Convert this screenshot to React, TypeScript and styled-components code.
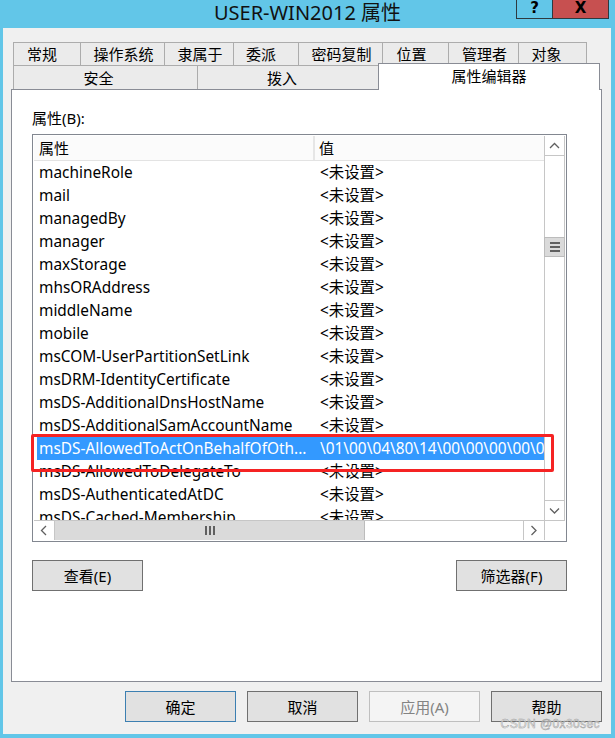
import React from "react";
import styled, { createGlobalStyle } from "styled-components";

const GlobalStyle = createGlobalStyle`
  html, body { margin: 0; padding: 0; background: #62c6e8; }
  body { font-family: "Noto Sans", "Noto Sans CJK SC", sans-serif; color: #000; }
  * { box-sizing: border-box; }
`;

const FONT = `"Noto Sans", "Noto Sans CJK SC", sans-serif`;

const Window = styled.div`
  position: relative;
  width: 615px;
  height: 738px;
  background: #62c6e8;
  display: flex;
  flex-direction: column;
  padding-bottom: 4px;
  overflow: hidden;
`;

const TitleBar = styled.div`
  height: 28px;
  flex: none;
  display: grid;
  grid-template-columns: 1fr auto 1fr;
  align-items: start;
`;

const Title = styled.div`
  grid-column: 2;
  font-family: ${FONT};
  font-size: 20px;
  line-height: 23px;
  padding-top: 1px;
  color: #111;
  white-space: nowrap;
`;

const CaptionGroup = styled.div`
  grid-column: 3;
  justify-self: end;
  display: flex;
  margin-right: 6px;
`;

const CaptionButton = styled.div<{ $w: number; $bg: string }>`
  width: ${(p) => p.$w}px;
  height: 19px;
  background: ${(p) => p.$bg};
  border: 1px solid #2e3a40;
  border-top: none;
  display: flex;
  justify-content: center;
  align-items: flex-start;
  & + & { margin-left: -1px; }
`;

const CaptionGlyph = styled.span`
  font-family: "DejaVu Sans", sans-serif;
  font-weight: bold;
  font-size: 15px;
  line-height: 16px;
  color: #000;
`;

const Body = styled.div`
  flex: 1;
  margin: 0 4px 0 3px;
  background: #f0f0f0;
  display: flex;
  flex-direction: column;
  padding: 14px 9px 12px 8px;
`;

const TabStrip = styled.div`
  display: flex;
  flex-direction: column;
  margin: 0 1px 0 2px;
  flex: none;
`;

const TabRow = styled.div<{ $h: number }>`
  display: flex;
  align-items: flex-start;
  height: ${(p) => p.$h}px;
`;

const Tab = styled.div<{ $w: number; $active?: boolean; $h: number; $shift?: number }>`
  width: ${(p) => p.$w}px;
  height: ${(p) => (p.$active ? p.$h + 3 : p.$h)}px;
  flex: none;
  border: 1px solid ${(p) => (p.$active ? "#898c95" : "#acacac")};
  border-bottom: none;
  background: ${(p) => (p.$active ? "#ffffff" : "#ebebeb")};
  font-family: ${FONT};
  font-size: 15px;
  line-height: 20px;
  display: flex;
  justify-content: center;
  align-items: ${(p) => (p.$active ? "flex-start" : "center")};
  padding-top: ${(p) => (p.$active ? 2 : 0)}px;
  padding-right: ${(p) => (p.$shift || 0) * 2}px;
  white-space: nowrap;
  position: relative;
  z-index: ${(p) => (p.$active ? 2 : 0)};
  margin-top: ${(p) => (p.$active ? -2 : 0)}px;
  & + & { margin-left: ${(p) => (p.$active ? -3 : -1)}px; }
`;

const Panel = styled.div`
  flex: 1;
  background: #ffffff;
  border: 1px solid #898c95;
  padding: 18px 0 0 20px;
  display: flex;
  flex-direction: column;
`;

const FieldLabel = styled.div`
  font-family: ${FONT};
  font-size: 15px;
  line-height: 20px;
  height: 20px;
  margin-bottom: 6px;
`;

const ListBox = styled.div`
  position: relative;
  width: 535px;
  height: 408px;
  border: 1px solid #828790;
  padding: 1px;
  background: #fff;
  display: grid;
  grid-template-columns: 1fr 21px;
  grid-template-rows: 1fr 20px;
`;

const ListArea = styled.div`
  display: flex;
  flex-direction: column;
  overflow: hidden;
  min-width: 0;
`;

const Header = styled.div`
  height: 25px;
  flex: none;
  display: grid;
  grid-template-columns: 279px 1fr;
  background: #fbfbfb;
  border-bottom: 1px solid #e3e3e3;
  font-family: ${FONT};
  font-size: 15px;
  line-height: 24px;
`;

const HeaderCell = styled.div<{ $divider?: boolean }>`
  padding-left: ${(p) => (p.$divider ? 4 : 5)}px;
  border-left: ${(p) => (p.$divider ? "2px solid #e6e6e6" : "none")};
  white-space: nowrap;
`;

const Rows = styled.div`
  flex: 1;
  overflow: hidden;
  padding-left: 3px;
`;

const Row = styled.div<{ $selected?: boolean }>`
  height: 23px;
  display: grid;
  grid-template-columns: 276px 1fr;
  font-family: ${FONT};
  font-size: 15.4px;
  line-height: 23px;
  background: ${(p) => (p.$selected ? "#3399ff" : "transparent")};
  color: ${(p) => (p.$selected ? "#fff" : "#000")};
`;

const Cell = styled.div<{ $value?: boolean }>`
  padding-left: ${(p) => (p.$value ? 7 : 2)}px;
  white-space: nowrap;
  overflow: hidden;
`;

const VScroll = styled.div`
  display: flex;
  flex-direction: column;
  border-left: 1px solid #c6c6c6;
  border-right: 1px solid #c6c6c6;
  background: #fff;
`;

const ArrowButton = styled.div<{ $edge: "top" | "bottom" | "left" | "right" }>`
  flex: none;
  width: ${(p) => (p.$edge === "left" || p.$edge === "right" ? "21px" : "auto")};
  height: ${(p) => (p.$edge === "top" || p.$edge === "bottom" ? "20px" : "auto")};
  display: flex;
  align-items: center;
  justify-content: center;
  background: #fff;
  ${(p) =>
    p.$edge === "top"
      ? "border-bottom: 1px solid #c6c6c6;"
      : p.$edge === "bottom"
      ? "border-top: 1px solid #c6c6c6;"
      : p.$edge === "left"
      ? "border-right: 1px solid #c6c6c6;"
      : "border-left: 1px solid #c6c6c6;"}
`;

const VTrack = styled.div`
  flex: 1;
  padding-top: 81px;
`;

const VThumb = styled.div`
  height: 20px;
  margin: 0 -1px;
  background: #dadada;
  border: 1px solid #bcbcbc;
  display: flex;
  align-items: center;
  justify-content: center;
`;

const HScroll = styled.div`
  display: flex;
  border-top: 1px solid #c6c6c6;
  background: #fff;
`;

const HTrack = styled.div`
  flex: 1;
  display: flex;
`;

const HThumb = styled.div`
  width: 310px;
  background: #dadada;
  border-right: 1px solid #bcbcbc;
  display: flex;
  align-items: center;
  justify-content: center;
`;

const Corner = styled.div`
  background: #fff;
  border-top: 1px solid #c6c6c6;
  border-left: 1px solid #c6c6c6;
`;

const Highlight = styled.div`
  position: absolute;
  left: -2px;
  top: 299px;
  width: 523px;
  height: 38px;
  border: 3px solid #f52323;
  border-radius: 2px;
  pointer-events: none;
`;

const ActionRow = styled.div`
  width: 535px;
  margin-top: 18px;
  display: flex;
  justify-content: space-between;
`;

const Button = styled.div<{ $variant?: "default" | "disabled" | "normal" }>`
  width: 111px;
  height: 31px;
  flex: none;
  background: ${(p) => (p.$variant === "disabled" ? "#f4f4f4" : "#e1e1e1")};
  border: 1px solid
    ${(p) =>
      p.$variant === "default" ? "#3c7fb1" : p.$variant === "disabled" ? "#bfbfbf" : "#707070"};
  color: ${(p) => (p.$variant === "disabled" ? "#838383" : "#000")};
  font-family: ${FONT};
  font-size: 15px;
  display: flex;
  align-items: center;
  justify-content: center;
  white-space: nowrap;
`;

const Footer = styled.div`
  margin-top: 9px;
  display: flex;
  justify-content: flex-end;
  gap: 11px;
  flex: none;
`;

const Watermark = styled.div`
  position: absolute;
  right: 15px;
  top: 717px;
  font-family: "Liberation Sans", sans-serif;
  font-size: 12px;
  line-height: 15px;
  color: rgba(255, 255, 255, 0.7);
  -webkit-text-stroke: 0.5px #9a9a9a;
  letter-spacing: 0.4px;
  pointer-events: none;
`;

const Chevron = ({ dir }: { dir: "up" | "down" | "left" | "right" }) => {
  const pts = {
    up: "1,6 5.5,1.5 10,6",
    down: "1,1.5 5.5,6 10,1.5",
    left: "6,1 1.5,5.5 6,10",
    right: "1.5,1 6,5.5 1.5,10",
  }[dir];
  const horiz = dir === "up" || dir === "down";
  return (
    <svg width={horiz ? 11 : 8} height={horiz ? 8 : 11} viewBox={horiz ? "0 0 11 8" : "0 0 8 11"}>
      <polyline points={pts} fill="none" stroke="#606060" strokeWidth="1.3" />
    </svg>
  );
};

const Grip = ({ vertical }: { vertical?: boolean }) =>
  vertical ? (
    <svg width="10" height="9" viewBox="0 0 10 9">
      <rect x="0" y="0" width="2" height="9" fill="#606060" />
      <rect x="4" y="0" width="2" height="9" fill="#606060" />
      <rect x="8" y="0" width="2" height="9" fill="#606060" />
    </svg>
  ) : (
    <svg width="10" height="10" viewBox="0 0 10 10">
      <rect x="0" y="0" width="10" height="2" fill="#606060" />
      <rect x="0" y="4" width="10" height="2" fill="#606060" />
      <rect x="0" y="8" width="10" height="2" fill="#606060" />
    </svg>
  );

const row1 = [
  { t: "常规", w: 70, s: 6 },
  { t: "操作系统", w: 87, s: 0 },
  { t: "隶属于", w: 72, s: 0 },
  { t: "委派", w: 68, s: 6 },
  { t: "密码复制", w: 87, s: 0 },
  { t: "位置", w: 69, s: 5 },
  { t: "管理者", w: 73, s: 0 },
  { t: "对象", w: 69, s: 6 },
];

const row2 = [
  { t: "安全", w: 187, s: 8 },
  { t: "拨入", w: 184, s: 7 },
  { t: "属性编辑器", w: 222, s: 0, active: true },
];

const UNSET = "<未设置>";

const attrs: { name: string; value: string; selected?: boolean }[] = [
  { name: "machineRole", value: UNSET },
  { name: "mail", value: UNSET },
  { name: "managedBy", value: UNSET },
  { name: "manager", value: UNSET },
  { name: "maxStorage", value: UNSET },
  { name: "mhsORAddress", value: UNSET },
  { name: "middleName", value: UNSET },
  { name: "mobile", value: UNSET },
  { name: "msCOM-UserPartitionSetLink", value: UNSET },
  { name: "msDRM-IdentityCertificate", value: UNSET },
  { name: "msDS-AdditionalDnsHostName", value: UNSET },
  { name: "msDS-AdditionalSamAccountName", value: UNSET },
  {
    name: "msDS-AllowedToActOnBehalfOfOth...",
    value: "\\01\\00\\04\\80\\14\\00\\00\\00\\00\\00\\00\\00",
    selected: true,
  },
  { name: "msDS-AllowedToDelegateTo", value: UNSET },
  { name: "msDS-AuthenticatedAtDC", value: UNSET },
  { name: "msDS-Cached-Membership", value: UNSET },
];

export default function App() {
  return (
    <>
      <GlobalStyle />
      <Window>
        <TitleBar>
          <Title>USER-WIN2012 属性</Title>
          <CaptionGroup>
            <CaptionButton $w={37} $bg="#62c6e8">
              <CaptionGlyph>?</CaptionGlyph>
            </CaptionButton>
            <CaptionButton $w={57} $bg="#c75050">
              <CaptionGlyph>X</CaptionGlyph>
            </CaptionButton>
          </CaptionGroup>
        </TitleBar>
        <Body>
          <TabStrip>
            <TabRow $h={23}>
              {row1.map((t) => (
                <Tab key={t.t} $w={t.w} $h={23} $shift={t.s}>
                  {t.t}
                </Tab>
              ))}
            </TabRow>
            <TabRow $h={24}>
              {row2.map((t) => (
                <Tab key={t.t} $w={t.w} $h={24} $shift={t.s} $active={t.active}>
                  {t.t}
                </Tab>
              ))}
            </TabRow>
          </TabStrip>
          <Panel>
            <FieldLabel>属性(B):</FieldLabel>
            <ListBox>
              <ListArea>
                <Header>
                  <HeaderCell>属性</HeaderCell>
                  <HeaderCell $divider>值</HeaderCell>
                </Header>
                <Rows>
                  {attrs.map((a) => (
                    <Row key={a.name} $selected={a.selected}>
                      <Cell>{a.name}</Cell>
                      <Cell $value>{a.value}</Cell>
                    </Row>
                  ))}
                </Rows>
              </ListArea>
              <VScroll>
                <ArrowButton $edge="top">
                  <Chevron dir="up" />
                </ArrowButton>
                <VTrack>
                  <VThumb>
                    <Grip />
                  </VThumb>
                </VTrack>
                <ArrowButton $edge="bottom">
                  <Chevron dir="down" />
                </ArrowButton>
              </VScroll>
              <HScroll>
                <ArrowButton $edge="left">
                  <Chevron dir="left" />
                </ArrowButton>
                <HTrack>
                  <HThumb>
                    <Grip vertical />
                  </HThumb>
                </HTrack>
                <ArrowButton $edge="right">
                  <Chevron dir="right" />
                </ArrowButton>
              </HScroll>
              <Corner />
              <Highlight />
            </ListBox>
            <ActionRow>
              <Button>查看(E)</Button>
              <Button>筛选器(F)</Button>
            </ActionRow>
          </Panel>
          <Footer>
            <Button $variant="default">确定</Button>
            <Button>取消</Button>
            <Button $variant="disabled">应用(A)</Button>
            <Button>帮助</Button>
          </Footer>
        </Body>
        <Watermark>CSDN @0x30sec</Watermark>
      </Window>
    </>
  );
}
